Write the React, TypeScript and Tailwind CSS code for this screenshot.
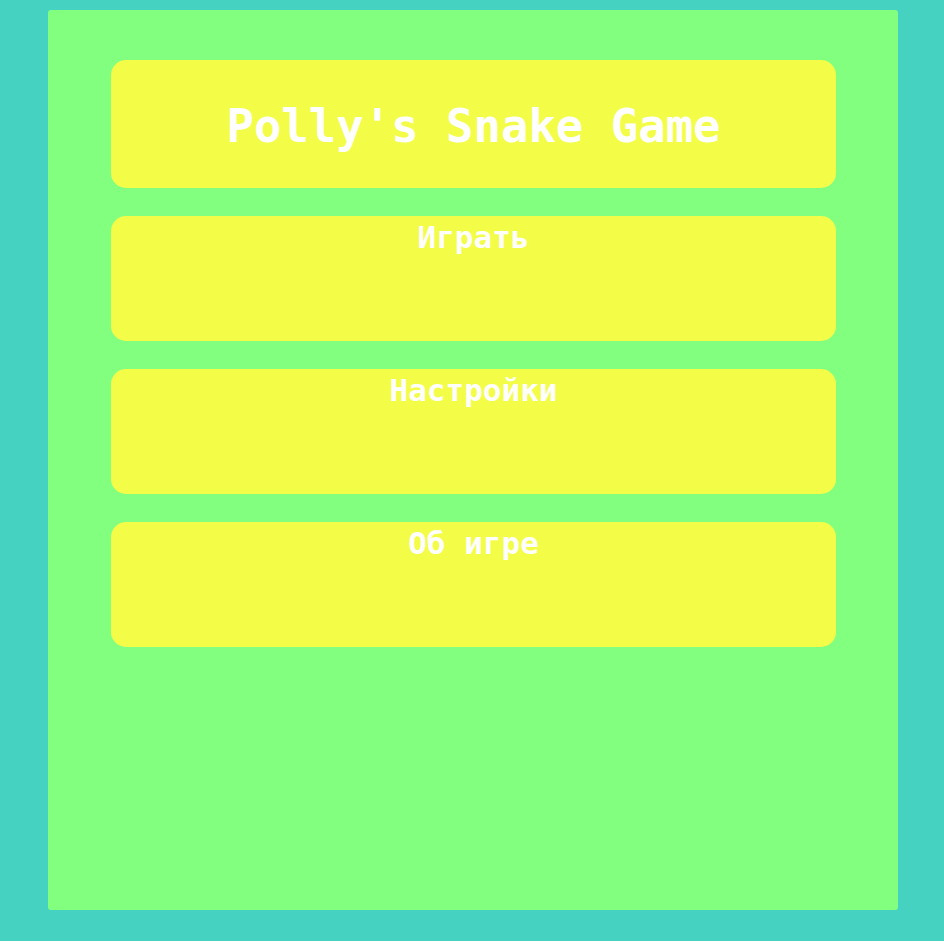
import React from 'react';

const MENU = ['Играть', 'Настройки', 'Об игре'];

const App: React.FC = () => {
    return (
        <div className="min-h-screen bg-[#45d2c0] pt-[10px] pb-[31px]" style={{ fontFamily: '"DejaVu Sans Mono", monospace' }}>
            <div className="ml-[48px] w-[850px] h-[900px] rounded-[3px] bg-[#83ff80] pt-[50px] pl-[63px]">
                <div className="w-[725px] flex flex-col gap-[28px]">
                    {/* Title */}
                    <div className="h-[128px] rounded-[15px] bg-[#f3fd48] flex items-center justify-center pt-[5px]">
                        <h1 className="text-[45.6px] font-bold text-white leading-none">Polly's Snake Game</h1>
                    </div>

                    {/* Menu buttons */}
                    {MENU.map((label) => (
                        <div key={label} className="h-[125px] rounded-[15px] bg-[#f3fd48] pt-[3px] text-center">
                            <span className="text-[31px] font-bold text-white leading-[1.164]">{label}</span>
                        </div>
                    ))}
                </div>
            </div>
        </div>
    );
};

export default App;
